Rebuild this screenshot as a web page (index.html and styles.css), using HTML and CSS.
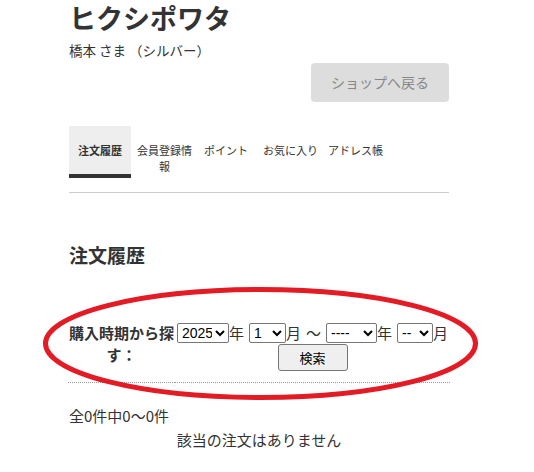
FILE: index.html
```html
<!DOCTYPE html>
<html lang="ja">
<head>
    <meta charset="UTF-8">
    <meta name="viewport" content="width=device-width, initial-scale=1.0">
    <title>注文履歴</title>
    <link rel="stylesheet" href="styles.css">
</head>
<body>
    <div class="page">
        <!-- ヘッダー -->
        <h1 class="shop-name">ヒクシポワタ</h1>
        <p class="member">橋本 さま （シルバー）</p>
        <div class="back-row">
            <a class="back-btn" href="#">ショップへ戻る</a>
        </div>

        <!-- タブ -->
        <ul class="tabs">
            <li class="active">注文履歴</li>
            <li class="wrap">会員登録情報</li>
            <li>ポイント</li>
            <li class="fav">お気に入り</li>
            <li>アドレス帳</li>
        </ul>

        <h2 class="title">注文履歴</h2>

        <!-- 検索フォーム -->
        <table class="search">
            <tr>
                <th>購入時期から探す：</th>
                <td>
                    <div class="period">
                        <select class="sel-year"><option>2025</option></select><span>年</span>
                        <select class="sel-month sp"><option>1</option></select><span>月</span>
                        <span class="sp">〜</span>
                        <select class="sel-year2 sp"><option>----</option></select><span>年</span>
                        <select class="sel-month2 sp"><option>--</option></select><span>月</span>
                    </div>
                    <div><button class="search-btn">検索</button></div>
                </td>
            </tr>
        </table>

        <p class="count">全0件中0〜0件</p>
        <p class="empty">該当の注文はありません</p>
    </div>

    <!-- 注釈の丸 -->
    <svg class="mark" width="534" height="472" viewBox="0 0 534 472">
        <ellipse cx="260.5" cy="343.5" rx="215" ry="54" fill="none" stroke="#e21b25" stroke-width="5"/>
    </svg>
</body>
</html>
```

FILE: styles.css
```css
*{
    padding: 0;
    margin: 0;
    list-style: none;
    box-sizing: border-box;
}
body{
    font-family: "Noto Sans CJK JP", "Noto Sans", sans-serif;
    color: #333;
    background: #fff;
}
.page{
    width: 380px;
    margin-left: 69px;
}
.shop-name{
    font-size: 27px;
    line-height: 36px;
    font-weight: bold;
}
.member{
    font-size: 13.5px;
    line-height: 18px;
    margin-top: 5px;
}
.back-row{
    display: flex;
    justify-content: flex-end;
    margin-top: 4px;
}
.back-btn{
    display: block;
    width: 138px;
    height: 39px;
    line-height: 39px;
    text-align: center;
    background: #ddd;
    color: #888;
    font-size: 14px;
    border-radius: 4px;
    text-decoration: none;
}
.tabs{
    display: flex;
    margin-top: 24px;
    border-bottom: 1px solid #ccc;
    padding-bottom: 14px;
}
.tabs li{
    height: 52px;
    padding: 16px 6px 0;
    font-size: 11px;
    line-height: 16px;
    text-align: center;
    border-bottom: 4px solid transparent;
}
.tabs li.active{
    width: 62px;
    padding: 16px 0 0;
    background: #eee;
    font-weight: bold;
    border-bottom-color: #333;
}
.tabs li.wrap{
    width: 67px;
}
.tabs li.fav{
    padding: 16px 4px 0 9px;
}
.title{
    font-size: 19px;
    line-height: 28px;
    margin-top: 48px;
    font-weight: bold;
}
.search{
    width: 382px;
    margin-left: -1px;
    margin-top: 53px;
    border-collapse: collapse;
    font-size: 15px;
    border-bottom: 1px dotted #999;
}
.search th{
    width: 107px;
    vertical-align: top;
    line-height: 22px;
    padding: 0 0 16px;
    font-weight: bold;
}
.search td{
    text-align: center;
    vertical-align: top;
    line-height: 22px;
    padding: 0 0 6px;
    white-space: nowrap;
}
.period{
    display: flex;
    justify-content: center;
    align-items: center;
    height: 22px;
}
.period .sp{
    margin-left: 5px;
}
.search select{
    height: 20px;
    font-size: 14px;
    font-family: "Liberation Sans", sans-serif;
    color: #000;
    border: 1px solid #767676;
    border-radius: 2px;
    background: #fff;
}
.sel-year{ width: 52px; }
.sel-month{ width: 37px; }
.sel-year2{ width: 51px; }
.sel-month2{ width: 36px; }
.search-btn{
    width: 70px;
    height: 27px;
    font-size: 13px;
    font-family: "Noto Sans CJK JP", sans-serif;
    color: #000;
    background: #efefef;
    border: 1px solid #767676;
    border-radius: 3px;
}
.count{
    font-size: 15px;
    line-height: 22px;
    margin-top: 22px;
}
.empty{
    font-size: 15px;
    line-height: 22px;
    text-align: center;
    margin-top: 2px;
}
.mark{
    position: absolute;
    left: 0;
    top: 0;
    pointer-events: none;
}
```
